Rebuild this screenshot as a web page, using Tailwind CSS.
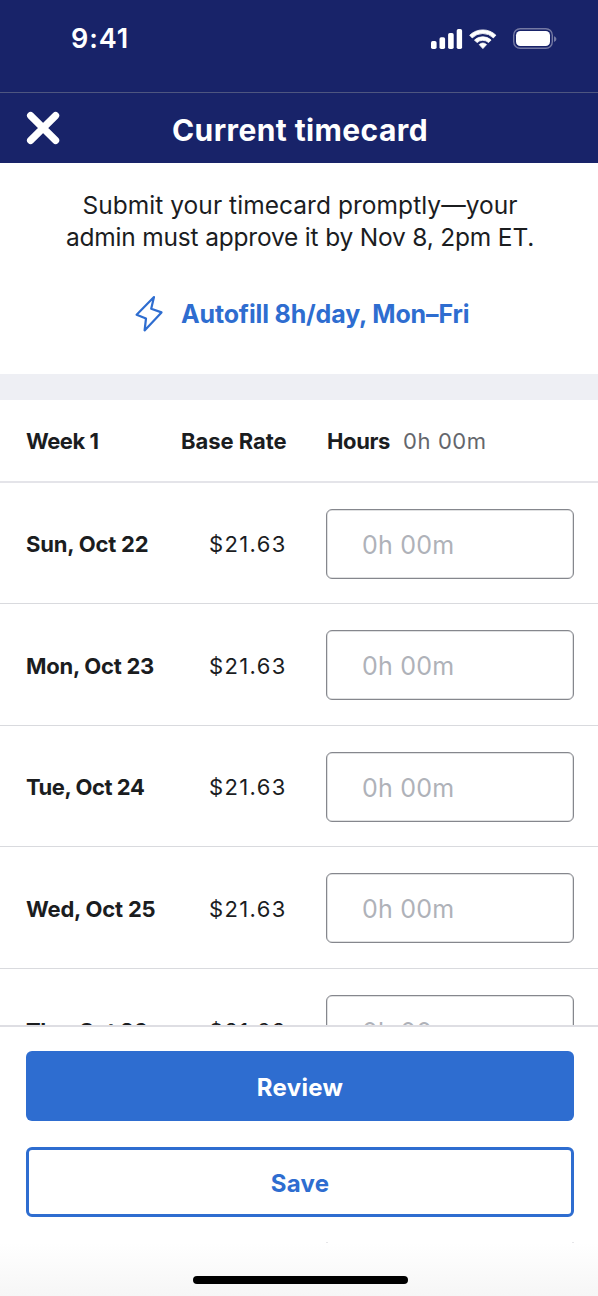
<!DOCTYPE html>
<html lang="en">
<head>
<meta charset="utf-8">
<title>Current timecard</title>
<script src="https://cdn.jsdelivr.net/npm/@tailwindcss/browser@4"></script>
</head>
<body class="bg-white">
<div class="relative flex h-[1296px] w-[598px] flex-col overflow-hidden bg-white font-['Inter',sans-serif] whitespace-nowrap text-[#1b1d1f]">
  <header class="shrink-0 bg-[#182369] text-white">
    <div class="flex h-[92px] justify-between pl-[71px] pr-[41px]">
      <span class="pt-[19px] text-[27px] leading-[40px] font-semibold tracking-[0.9px]">9:41</span>
      <svg class="mt-[26px]" width="126" height="26" viewBox="431 26 126 26" fill="#fff">
        <rect x="431" y="41" width="5.6" height="8" rx="1.7"/>
        <rect x="439.5" y="37.3" width="5.6" height="11.7" rx="1.7"/>
        <rect x="448.1" y="33" width="5.6" height="16" rx="1.7"/>
        <rect x="456.7" y="29" width="5.4" height="20" rx="1.7"/>
        <path d="M469.700 35.200a18.800 18.800 0 0 1 26.200 0l-2.500 2.700a15 15 0 0 0-21.200 0z" stroke="#fff" stroke-width=".8" stroke-linejoin="round"/>
        <path d="M474.500 40a12.200 12.200 0 0 1 16.600 0l-2.500 2.600a8.500 8.500 0 0 0-11.600 0z" stroke="#fff" stroke-width=".8" stroke-linejoin="round"/>
        <path d="M479.200 44.600a5.700 5.700 0 0 1 7.400 0l-3.700 4z" stroke="#fff" stroke-width=".8" stroke-linejoin="round"/>
        <rect x="513.700" y="28.700" width="38.600" height="19.600" rx="6.500" fill="none" stroke="#7479a3" stroke-width="1.400"/>
        <rect x="516" y="31" width="34" height="15" rx="4.300"/>
        <path d="M554 36.200c1.600.7 2.400 1.700 2.400 2.900s-.8 2.200-2.400 2.900z" fill="#7479a3"/>
      </svg>
    </div>
    <div class="relative flex h-[71px] items-center justify-center border-t border-[#4e5680]">
      <svg class="absolute left-[26px] top-[17.500px]" width="34" height="34" viewBox="0 0 34 34" stroke="#fff" stroke-width="7.200" stroke-linecap="round"><path d="M4.600 4.600 29.600 29.400M29.600 4.600 4.600 29.400"/></svg>
      <h1 class="pt-[3px] pl-[2px] text-[30px] leading-[36px] font-bold tracking-[0.4px]">Current timecard</h1>
    </div>
  </header>

  <section class="h-[211px] shrink-0 pt-[26px] text-center">
    <p class="pl-[2px] text-[24.500px] leading-[32px] font-normal"><span class="tracking-[0.050px]">Submit your timecard promptly—your</span><br><span class="tracking-[-0.190px]">admin must approve it by Nov 8, 2pm ET.</span></p>
    <div class="mt-[41px] flex h-[40px] items-center pl-[134px] text-[#2e6dd0]">
      <svg width="30" height="40" viewBox="134 293.500 30 40" fill="none" stroke="currentColor" stroke-width="2.200" stroke-linejoin="round"><path d="M154 296.500 136.600 314.300 146 318 144.600 330 161.500 311.900 151.200 308.300z"/></svg>
      <span class="ml-[17px] text-[25px] leading-[40px] font-bold tracking-[-0.150px]">Autofill 8h/day, Mon–Fri</span>
    </div>
  </section>
  <div class="h-[26px] shrink-0 bg-[#eeeff4]"></div>

  <main class="h-[625px] shrink-0 overflow-hidden text-[22px]">
    <div class="flex h-[83px] items-center border-b-2 border-[#e4e4e9] pl-[26px] pt-[1px] leading-[30px] font-bold">
      <div class="w-[155px] tracking-[-0.500px]">Week 1</div>
      <div class="w-[146px] tracking-[-0.050px]">Base Rate</div>
      <div class="w-[76px] tracking-[-0.400px]">Hours</div>
      <div class="font-normal tracking-[0.600px] text-[#64666c]">0h 00m</div>
    </div>
    <div class="flex h-[121px] items-center border-b border-[#d9dade] pl-[26px]">
      <div class="w-[183px] pt-[2px] font-bold tracking-[-0.200px]">Sun, Oct 22</div>
      <div class="w-[117px] pt-[2px] font-normal tracking-[1.350px]">$21.63</div>
      <div class="mt-px flex h-[70px] w-[248px] items-center rounded-[6px] border border-[#85878d] pl-[35px] pt-[4px] text-[25px] font-normal tracking-[0.200px] text-[#afb2b9] shadow-[inset_0_0_0_0.500px_#85878d80]">0h 00m</div>
    </div>
    <div class="flex h-[122px] items-center border-b border-[#d9dade] pl-[26px]">
      <div class="w-[183px] pt-[3px] font-bold tracking-[-0.250px]">Mon, Oct 23</div>
      <div class="w-[117px] pt-[3px] font-normal tracking-[1.350px]">$21.63</div>
      <div class="mt-px flex h-[70px] w-[248px] items-center rounded-[6px] border border-[#85878d] pl-[35px] pt-[3px] text-[25px] font-normal tracking-[0.200px] text-[#afb2b9] shadow-[inset_0_0_0_0.500px_#85878d80]">0h 00m</div>
    </div>
    <div class="flex h-[121px] items-center border-b border-[#d9dade] pl-[26px]">
      <div class="w-[183px] pt-[2px] font-bold tracking-[-0.450px]">Tue, Oct 24</div>
      <div class="w-[117px] pt-[2px] font-normal tracking-[1.350px]">$21.63</div>
      <div class="mt-px flex h-[70px] w-[248px] items-center rounded-[6px] border border-[#85878d] pl-[35px] pt-[4px] text-[25px] font-normal tracking-[0.200px] text-[#afb2b9] shadow-[inset_0_0_0_0.500px_#85878d80]">0h 00m</div>
    </div>
    <div class="flex h-[122px] items-center border-b border-[#d9dade] pl-[26px]">
      <div class="w-[183px] pt-[3px] font-bold tracking-[-0.200px]">Wed, Oct 25</div>
      <div class="w-[117px] pt-[3px] font-normal tracking-[1.350px]">$21.63</div>
      <div class="mt-px flex h-[70px] w-[248px] items-center rounded-[6px] border border-[#85878d] pl-[35px] pt-[3px] text-[25px] font-normal tracking-[0.200px] text-[#afb2b9] shadow-[inset_0_0_0_0.500px_#85878d80]">0h 00m</div>
    </div>
    <div class="flex h-[121px] items-center border-b border-[#d9dade] pl-[26px]">
      <div class="w-[183px] pt-[5px] font-bold tracking-[-0.350px]">Thu, Oct 26</div>
      <div class="w-[117px] pt-[5px] font-normal tracking-[1.350px]">$21.63</div>
      <div class="mt-px flex h-[70px] w-[248px] items-center rounded-[6px] border border-[#85878d] pl-[35px] pt-[7px] text-[25px] font-normal tracking-[0.200px] text-[#afb2b9] shadow-[inset_0_0_0_0.500px_#85878d80]">0h 00m</div>
    </div>
  </main>

  <footer class="flex grow flex-col border-t-2 border-[#dedee3] pl-[26px] pr-[24px] pt-[24px] text-[24px] font-bold">
    <button class="h-[70px] shrink-0 rounded-[6px] bg-[#2e6dd0] pt-[3px] text-white tracking-[0.300px]">Review</button>
    <button class="mt-[26px] h-[70px] shrink-0 rounded-[6px] border-[3px] border-[#2e6dd0] pt-[3px] text-[#2e6dd0] tracking-[0.300px]">Save</button>
    <div class="mt-[25px] ml-[300px] flex h-px justify-between">
      <i class="w-[2px] bg-[#e6e6e9]"></i><i class="w-[2px] bg-[#e6e6e9]"></i>
    </div>
    <div class="-ml-[26px] -mr-[24px] flex h-[53px] justify-center bg-linear-to-b from-white to-[#f6f6f6] pt-[33px] pl-[3px]">
      <div class="h-[8px] w-[215px] rounded-full bg-black"></div>
    </div>
  </footer>
</div>
</body>
</html>
